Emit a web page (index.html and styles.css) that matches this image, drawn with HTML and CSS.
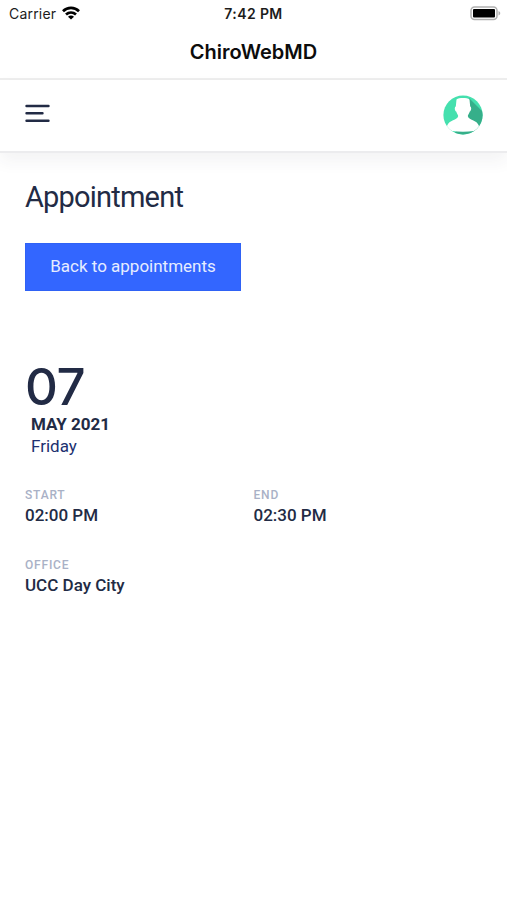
FILE: index.html
```
<!DOCTYPE html>
<html lang="en">
<head>
  <meta charset="UTF-8">
  <meta name="viewport" content="width=device-width, initial-scale=1.0">
  <title>ChiroWebMD</title>
  <link rel="stylesheet" href="styles.css">
</head>
<body>
  <div class="status-bar">
    <div class="carrier">
      <span>Carrier</span>
      <svg class="wifi" width="18" height="14" viewBox="0 0 18 14" fill="none" stroke="#000" stroke-width="2.7">
        <path d="M1 5.200C5.500 .8 12.500 .8 17 5.200"/>
        <path d="M4 8.600C6.900 5.900 11.100 5.900 14 8.600"/>
        <path d="M9 13.500L6 10.700C7.600 9.100 10.400 9.100 12 10.700Z" fill="#000" stroke="none"/>
      </svg>
    </div>
    <div class="time">7:42 PM</div>
    <svg class="battery" width="31" height="15" viewBox="0 0 31 15">
      <rect x="1" y="1" width="26" height="12.500" rx="3.500" fill="#fff" stroke="#b0b0b0" stroke-width="1.500"/>
      <rect x="3" y="3" width="22" height="8.500" rx="1" fill="#000"/>
      <path d="M28.500 5v4.500c2.300-.8 2.300-3.700 0-4.500z" fill="#b0b0b0"/>
    </svg>
  </div>

  <div class="title-bar">ChiroWebMD</div>

  <header class="header">
    <svg class="menu" width="25" height="19" viewBox="0 0 25 19" stroke="#222b45" stroke-width="2.400" stroke-linecap="round">
      <path d="M1.500 2h22M1.500 9.300h16M1.500 16.700h22"/>
    </svg>
    <svg class="avatar" width="40" height="40" viewBox="0 0 40 40">
      <defs>
        <clipPath id="circle"><circle cx="20" cy="20" r="19.600"/></clipPath>
      </defs>
      <g clip-path="url(#circle)">
        <rect width="40" height="40" fill="#45e0ae"/>
        <path d="M26 3L42 19V40H10L24 24z" fill="#36af8a"/>
        <path d="M13.500 4.500C16 2.600 24 2.600 26.500 4.500L27.200 11.500C28.800 12 28.300 16 26.800 16.500C26.300 18.500 25 19.500 24.800 21C25.500 25.500 34 24.500 36 31L40 29V33L31 36Q20 37.500 9 36L0 33V29L4 31C6 24.500 14.500 25.500 15.200 21C15 19.500 13.700 18.500 13.200 16.500C11.700 16 11.200 12 12.800 11.500z" fill="#fff"/>
      </g>
    </svg>
  </header>

  <main class="content">
    <h1>Appointment</h1>
    <button class="back-btn">Back to appointments</button>

    <div class="date">
      <div class="day">07</div>
      <div class="month">MAY 2021</div>
      <div class="weekday">Friday</div>
    </div>

    <div class="details">
      <div class="item">
        <div class="label">START</div>
        <div class="value">02:00 PM</div>
      </div>
      <div class="item">
        <div class="label">END</div>
        <div class="value">02:30 PM</div>
      </div>
      <div class="item">
        <div class="label">OFFICE</div>
        <div class="value">UCC Day City</div>
      </div>
    </div>
  </main>
</body>
</html>
```
FILE: styles.css
```
* {
  box-sizing: border-box;
}
body {
  margin: 0;
  min-height: 900px;
  background: #fff;
  color: #222b45;
  font-family: Roboto, sans-serif;
}
.status-bar {
  display: grid;
  grid-template-columns: 1fr auto 1fr;
  align-items: center;
  height: 27px;
  padding: 0 6px 0 9px;
  font-family: Inter, sans-serif;
  font-size: 14px;
  line-height: 27px;
  color: #1c1c1c;
}
.carrier {
  display: flex;
  align-items: center;
  gap: 6px;
  letter-spacing: 0.2px;
}
.wifi {
  margin-top: -2px;
}
.time {
  margin-right: 3px;
  font-weight: 600;
  letter-spacing: 0.4px;
}
.battery {
  justify-self: end;
}
.title-bar {
  height: 53px;
  border-bottom: 2px solid #eee;
  font-family: Inter, sans-serif;
  font-size: 20px;
  font-weight: 600;
  line-height: 51px;
  text-align: center;
  color: #0c0c0c;
}
.header {
  display: flex;
  justify-content: space-between;
  align-items: flex-start;
  height: 73px;
  padding: 15px 24px 0 25px;
  border-bottom: 2px solid #ececee;
  box-shadow: 0 8px 16px rgba(44, 51, 73, 0.06);
}
.menu {
  margin-top: 9px;
}
.content {
  padding: 25px 25px;
}
h1 {
  margin: 0;
  font-size: 29px;
  font-weight: 400;
  line-height: 38px;
  letter-spacing: -0.8px;
}
.back-btn {
  display: block;
  width: 216px;
  height: 48px;
  margin-top: 27px;
  padding: 0 0 2px;
  border: 1px solid #2f62f5;
  background: #3366ff;
  color: #e6edff;
  font-family: Roboto, sans-serif;
  font-size: 17px;
}
.date {
  margin-top: 65px;
}
.day {
  font-family: Inter, sans-serif;
  font-size: 51px;
  font-weight: 500;
  line-height: 62px;
  letter-spacing: -0.5px;
  margin-bottom: -5px;
}
.month,
.weekday {
  padding-left: 6px;
  font-size: 17px;
  line-height: 22px;
}
.month {
  font-weight: 700;
}
.weekday {
  color: #203070;
}
.details {
  display: grid;
  grid-template-columns: 1fr 1fr;
  row-gap: 29px;
  margin-top: 29px;
}
.label {
  font-size: 12px;
  font-weight: 500;
  line-height: 18px;
  letter-spacing: 0.8px;
  color: #a9b1c6;
}
.value {
  font-size: 17px;
  font-weight: 500;
  line-height: 23px;
}
```
